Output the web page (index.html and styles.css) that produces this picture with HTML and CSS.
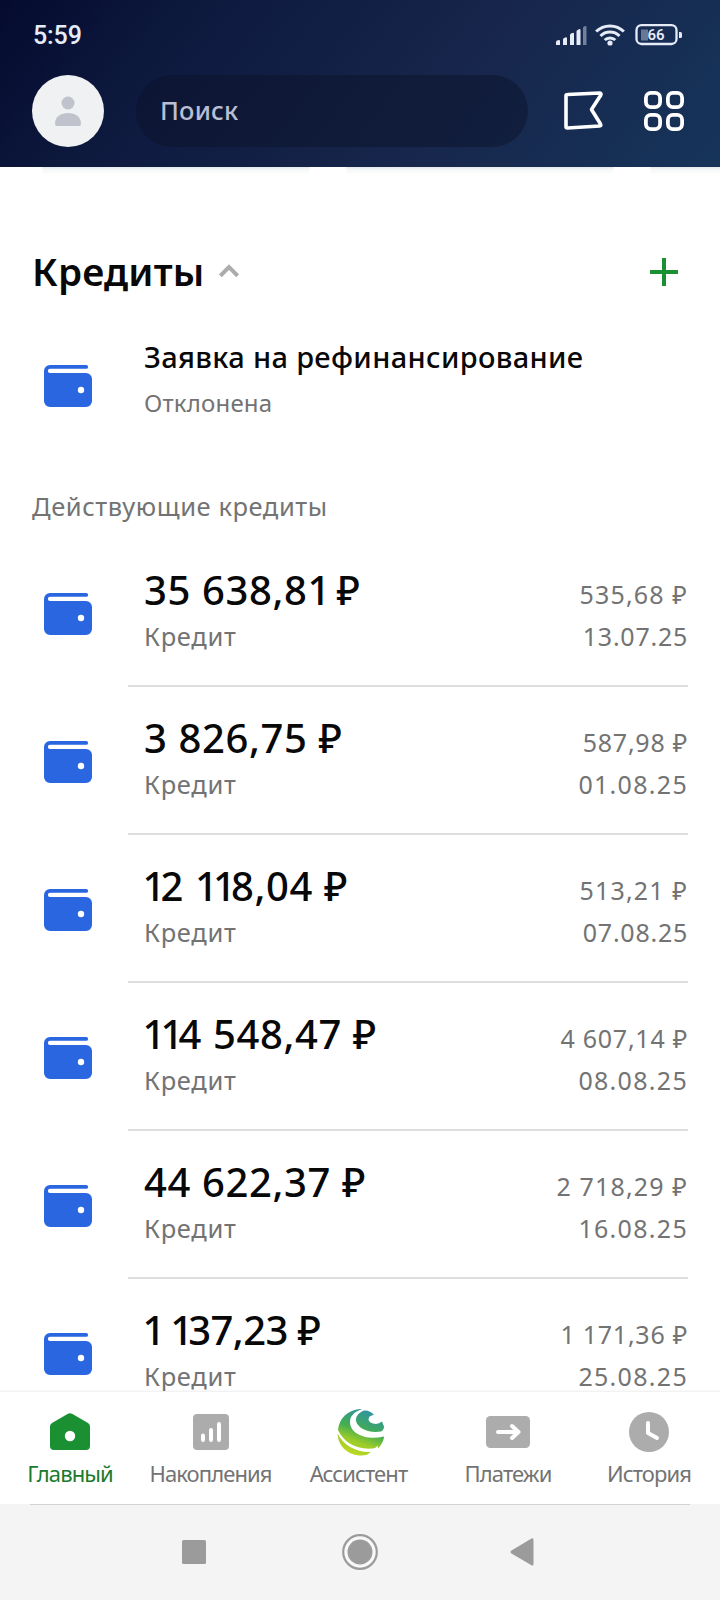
FILE: index.html
```html
<!DOCTYPE html>
<html lang="ru">
<head>
<meta charset="utf-8">
<meta name="viewport" content="width=device-width">
<title>Кредиты</title>
<link rel="stylesheet" href="styles.css">
</head>
<body>
<svg class="defs" width="0" height="0" aria-hidden="true">
  <symbol id="wallet" viewBox="0 0 48 42">
    <path fill="#2a66e0" d="M6 0H42.200a1.900 1.900 0 0 1 0 3.800H6a2 2 0 0 0 0 4.200H42a6 6 0 0 1 6 6V36a6 6 0 0 1-6 6H6a6 6 0 0 1-6-6V6a6 6 0 0 1 6-6z"/>
    <circle cx="37" cy="25" r="3.200" fill="#fff"/>
  </symbol>
</svg>
<div class="app">
  <header class="header">
    <div class="status">
      <span class="time">5:59</span>
      <svg class="signal" width="142" height="24" viewBox="0 0 142 24">
        <g fill="#e6ebf8">
          <path d="M1 22v-3q0-1 1-1.500l2-.500q1 0 1 1v4zM8 22v-5.500q0-1 1-1.500l2-.800q1 0 1 1V22zM15 22V12q0-1 1-1.500l2-.800q1 0 1 1V22zM21.500 22V8.500q0-1 1-1.500l2-1q1 0 1 1v15z"/>
          <path opacity=".45" d="M28 22V5q0-1 1-1.500l1-.500q1.500 0 1.500 1v18z"/>
          <circle cx="55" cy="20" r="2.600"/>
          <rect x="86" y="6.500" width="7" height="11" opacity=".4"/>
          <path d="M124 9h1.500q1.500 0 1.500 1.500v3q0 1.500-1.500 1.500H124z"/>
        </g>
        <g fill="none" stroke="#e6ebf8">
          <g stroke-width="3"><path d="M41.100 8.500a20 20 0 0 1 27.800 0"/><path d="M45.500 13a13.500 13.500 0 0 1 19 0"/><path d="M49.700 17a7.700 7.700 0 0 1 10.600 0" /></g>
          <rect x="81.500" y="2.200" width="40" height="18.800" rx="5" stroke-width="2.300"/>
        </g>
        <text x="92.500" y="16.500" class="battery">66</text>
      </svg>
    </div>
    <div class="toolbar">
      <div class="avatar">
        <svg width="28" height="32" viewBox="0 0 28 32" fill="#c0c3cb"><circle cx="14" cy="8" r="6.500"/><path d="M1 28.500C1 21.500 7 18 14 18s13 3.500 13 10.500q0 2.500-2 2.500H3q-2 0-2-2.500z"/></svg>
      </div>
      <div class="search">Поиск</div>
      <svg class="flag" width="40" height="40" viewBox="0 0 40 40" fill="none" stroke="#fff" stroke-width="3.600" stroke-linejoin="round"><path d="M3.500 3.500q-1.500 0-1.500 1.500V35.500q0 1.500 1.500 1.500L35.500 35q2-.2 1-2L27.500 18.500 36.700 4.200q1-2-1-2.200z"/></svg>
      <svg class="grid" width="40" height="40" viewBox="0 0 40 40" fill="none" stroke="#fff" stroke-width="3.800"><rect x="1.900" y="1.900" width="14.200" height="14.200" rx="5"/><rect x="23.900" y="1.900" width="14.200" height="14.200" rx="5"/><rect x="1.900" y="23.900" width="14.200" height="14.200" rx="5"/><rect x="23.900" y="23.900" width="14.200" height="14.200" rx="5"/></svg>
    </div>
  </header>
  <main class="content">
    <div class="cards"><i></i><i></i><i></i></div>
    <div class="heading">
      <h1>Кредиты</h1>
      <svg class="chevron" width="20" height="14" viewBox="0 0 20 14" fill="none" stroke="#acacac" stroke-width="4"><path d="M1.400 11.800 10 3.200l8.600 8.600"/></svg>
      <svg class="plus" width="28" height="28" viewBox="0 0 28 28" stroke="#1a9032" stroke-width="4"><path d="M14 0v28M0 14h28"/></svg>
    </div>
    <div class="request">
      <svg class="wallet"><use href="#wallet"/></svg>
      <div class="info"><div class="title">Заявка на рефинансирование</div><div class="state">Отклонена</div></div>
    </div>
    <h2>Действующие кредиты</h2>
    <ul class="loans">
      <li><svg class="wallet"><use href="#wallet"/></svg><div class="row"><div><div class="sum">35 638,8<span class="one">1</span> ₽</div><div class="kind">Кредит</div></div><div class="due"><div class="pay">535,68 ₽</div><div class="date tight">13.07.25</div></div></div></li>
      <li><svg class="wallet"><use href="#wallet"/></svg><div class="row"><div><div class="sum">3 826,75 ₽</div><div class="kind">Кредит</div></div><div class="due"><div class="pay tight">587,98 ₽</div><div class="date">01.08.25</div></div></div></li>
      <li><svg class="wallet"><use href="#wallet"/></svg><div class="row"><div><div class="sum lead"><span class="one">1</span>2 <span class="one">11</span>8,04 ₽</div><div class="kind">Кредит</div></div><div class="due"><div class="pay">513,21 ₽</div><div class="date tight">07.08.25</div></div></div></li>
      <li><svg class="wallet"><use href="#wallet"/></svg><div class="row"><div><div class="sum lead"><span class="one">11</span>4 548,47 ₽</div><div class="kind">Кредит</div></div><div class="due"><div class="pay tight">4 607,14 ₽</div><div class="date">08.08.25</div></div></div></li>
      <li><svg class="wallet"><use href="#wallet"/></svg><div class="row"><div><div class="sum">44 622,37 ₽</div><div class="kind">Кредит</div></div><div class="due"><div class="pay">2 718,29 ₽</div><div class="date">16.08.25</div></div></div></li>
      <li><svg class="wallet"><use href="#wallet"/></svg><div class="row"><div><div class="sum lead narrow"><span class="one">1</span> <span class="one">1</span>37,23 ₽</div><div class="kind">Кредит</div></div><div class="due"><div class="pay tight">1 171,36 ₽</div><div class="date">25.08.25</div></div></div></li>
    </ul>
  </main>
  <nav class="tabs">
    <a class="tab home"><svg width="48" height="48" viewBox="0 0 48 48"><path fill="#1a9032" d="M21.500 4.900q2.500-1.500 5 0L42 14q2 1.200 2 3.500V37q0 4-4 4H8q-4 0-4-4V17.500Q4 15.200 6 14z"/><circle cx="24" cy="27" r="5.200" fill="#fff"/></svg><span>Главный</span></a>
    <a class="tab savings"><svg width="48" height="48" viewBox="0 0 48 48"><rect x="6" y="5" width="36" height="36" rx="4" fill="#acacac"/><path d="M16 31v-4.500M24 31V21M32 31V15" stroke="#fff" stroke-width="4" stroke-linecap="round"/></svg><span>Накопления</span></a>
    <a class="tab assistant"><svg width="48" height="48" viewBox="0 0 48 48"><defs><linearGradient id="brand" gradientUnits="userSpaceOnUse" x1="32" y1="0" x2="16" y2="47"><stop offset="0" stop-color="#2c91aa"/><stop offset=".45" stop-color="#43ae50"/><stop offset=".7" stop-color="#9acb2a"/><stop offset="1" stop-color="#c0da20"/></linearGradient></defs><g fill="url(#brand)"><path d="M23 0C10 1 2 10 1 21 6 32 18 41 36 39.500 38.500 39 39.500 38 40.500 36.500L41 39.500C44.500 36 47 31 47 27.500 30 32 13 25 13 13 13 7 17 3 25 0z"/><path d="M27 1.500C21 4 18.500 8 19 12 21 20 33 24.500 44 22.500q3-1.500 3-5l-2-5q-4 3.500-9 2-6-2-4-6 1-2 5-2.500Q33 1 27 1.500z"/><path d="M.5 24.500C1 37 11 46.500 24 46.500q7 0 9.500-3.500C19 43.500 6 36 .5 24.500z"/></g></svg><span>Ассистент</span></a>
    <a class="tab payments"><svg width="48" height="48" viewBox="0 0 48 48"><rect x="2" y="7" width="44" height="32" rx="4.500" fill="#acacac"/><path d="M14 23h19M28 17l6.500 6-6.500 6" fill="none" stroke="#fff" stroke-width="4" stroke-linecap="round" stroke-linejoin="round"/></svg><span>Платежи</span></a>
    <a class="tab history"><svg width="48" height="48" viewBox="0 0 48 48"><circle cx="24" cy="23" r="20" fill="#acacac"/><path d="M23 14v10l9 5" fill="none" stroke="#fff" stroke-width="4" stroke-linecap="round" stroke-linejoin="round"/></svg><span>История</span></a>
  </nav>
  <footer class="system">
    <svg width="24" height="24"><rect width="24" height="24" rx="1.500" fill="#9b9b9b"/></svg>
    <svg width="36" height="36" viewBox="0 0 36 36"><circle cx="18" cy="18" r="16.800" fill="#f8f8f8" stroke="#9b9b9b" stroke-width="2.200"/><circle cx="18" cy="18" r="12.500" fill="#9b9b9b"/></svg>
    <svg class="back" width="24" height="28" viewBox="0 0 24 28"><path fill="#9b9b9b" d="M21.500.5Q23.500-.3 23.500 2v24q0 2.300-2 1.300L1.500 15.500q-2-1.500 0-3z"/></svg>
  </footer>
</div>
</body>
</html>
```
FILE: styles.css
```css
* { box-sizing: border-box; }
body { margin: 0; background: #fff; font-family: "Noto Sans", "Open Sans", sans-serif; color: #080808; }
.defs { display: block; position: absolute; }
svg { display: block; flex: none; }
.app { width: 720px; height: 1600px; display: flex; flex-direction: column; overflow: hidden; }
.header { height: 167px; flex: none; padding: 0 36px 0 32px; background: linear-gradient(128deg, #040b2e 0%, #0d183d 22%, #17264c 62%, #16345a 100%); }
.status { height: 75px; padding: 21px 0 0 1px; display: flex; justify-content: space-between; align-items: flex-start; }
.time { font: 500 25px/30px Roboto, sans-serif; color: #e6ebf8; letter-spacing: -.1px; }
.signal { margin: 2px -13px 0 0; }
.battery { font: 600 15px Roboto, sans-serif; fill: #e6ebf8; }
.toolbar { display: flex; align-items: center; height: 72px; }
.avatar { width: 72px; height: 72px; border-radius: 50%; background: #eff1f3; display: flex; align-items: center; justify-content: center; }
.search { width: 392px; height: 72px; margin-left: 32px; padding-left: 24px; border-radius: 36px; background: rgba(12, 18, 42, .5); color: #b9bed2; font-size: 25.500px; font-weight: 500; line-height: 71px; letter-spacing: .2px; }
.flag { margin-left: 36px; }
.grid { margin-left: 40px; }
.content { flex: 1; min-height: 0; overflow: hidden; }
.cards { height: 12px; display: flex; gap: 36px; padding-left: 42px; overflow: hidden; }
.cards i { flex: none; width: 268px; height: 12px; background: linear-gradient(#e2e9ed 0, #f7f9f9 3px, #fff 9px); border-radius: 0 0 12px 12px; }
.heading { height: 56px; margin: 65px 42px 0 32px; display: flex; align-items: center; }
h1 { margin: 0; font-size: 38.500px; line-height: 56px; font-weight: 600; letter-spacing: .2px; position: relative; top: -1px; }
.chevron { margin: -2px 0 0 15px; }
.plus { margin-left: auto; }
.request { height: 126px; padding: 28px 32px 0 44px; display: flex; }
.wallet { width: 48px; height: 42px; }
.request .wallet { margin-top: 37px; }
.info { margin-left: 52px; padding-top: 9px; }
.title { font-size: 29px; font-weight: 500; line-height: 40px; white-space: nowrap; letter-spacing: .35px; }
.state { margin-top: 8px; font-size: 24px; line-height: 36px; color: #737373; letter-spacing: .2px; }
h2 { margin: 60px 0 0 32px; font-size: 25.500px; line-height: 40px; font-weight: 400; color: #737373; letter-spacing: .550px; }
.loans { list-style: none; margin: 0; padding: 13px 32px 0 44px; }
.loans li { height: 148px; display: flex; }
.loans .wallet { margin-top: 54px; }
.row { flex: 1; margin-left: 36px; padding-left: 16px; display: flex; justify-content: space-between; border-bottom: 2px solid #dedede; }
.sum { padding-top: 23px; font-size: 40px; font-weight: 500; line-height: 56px; white-space: nowrap; letter-spacing: .6px; }
.sum.lead { text-indent: -1.500px; }
.sum.narrow { letter-spacing: -.6px; }
.sum .one { letter-spacing: -4.900px; }
.kind { font-size: 25.500px; line-height: 36px; letter-spacing: .7px; color: #737373; }
.due { text-align: right; font-size: 25px; line-height: 36px; color: #737373; padding: 37px 0 0 0; }
.pay { letter-spacing: 1.150px; }
.date { margin-top: 6px; letter-spacing: 1.300px; }
.pay.tight { letter-spacing: .750px; }
.date.tight { letter-spacing: .750px; }
.tabs { height: 113px; flex: none; background: #fff; border-top: 1px solid #f2f2f2; display: grid; grid-template-columns: 140px 141px 155px 144px 138px; box-shadow: 0 -1px 2px rgba(0, 0, 0, .03); }
.tab { display: flex; flex-direction: column; align-items: center; padding-top: 17px; font-size: 22px; line-height: 30px; letter-spacing: -.9px; color: #737373; }
.tab span { margin-top: 1px; }
.assistant svg { margin-left: 4px; }
.home { color: #1a7a2c; }
.system { height: 96px; flex: none; background: linear-gradient(#d4d4d4, #d4d4d4) 30px 0 / 660px 1px no-repeat #f4f4f4; display: flex; align-items: center; justify-content: center; gap: 136px; }
.back { margin-left: -4px; margin-right: 4px; }
```
